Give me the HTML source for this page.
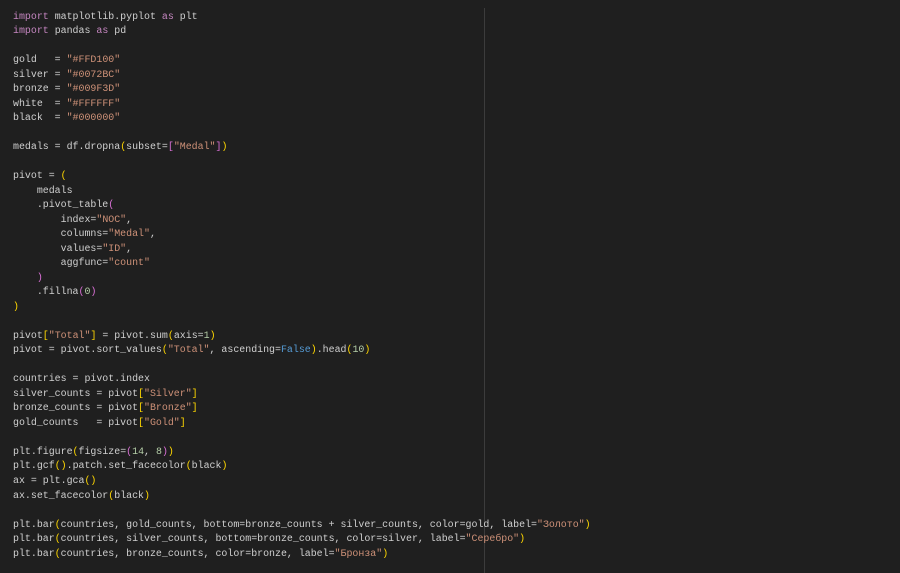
<!DOCTYPE html>
<html><head><meta charset="utf-8"><style>
html,body{margin:0;padding:0;background:#1f1f1f;width:900px;height:573px;overflow:hidden}
pre{position:absolute;left:13px;top:9.5px;margin:0;font-family:"Liberation Mono",monospace;font-size:9.93px;line-height:14.52px;color:#d0d0d0}
.k{color:#c586c0}.s{color:#ce9178}.n{color:#b5cea8}.b{color:#569cd6}
.y{color:#ffd700}.p{color:#da70d6}.l{color:#179fff}
.v{position:absolute;left:484px;top:8px;width:1px;height:565px;background:#3c3c3c}
</style></head><body>
<div class="v"></div>
<pre><span class="k">import</span> matplotlib.pyplot <span class="k">as</span> plt
<span class="k">import</span> pandas <span class="k">as</span> pd

gold   = <span class="s">"#FFD100"</span>
silver = <span class="s">"#0072BC"</span>
bronze = <span class="s">"#009F3D"</span>
white  = <span class="s">"#FFFFFF"</span>
black  = <span class="s">"#000000"</span>

medals = df.dropna<span class="y">(</span>subset=<span class="p">[</span><span class="s">"Medal"</span><span class="p">]</span><span class="y">)</span>

pivot = <span class="y">(</span>
    medals
    .pivot_table<span class="p">(</span>
        index=<span class="s">"NOC"</span>,
        columns=<span class="s">"Medal"</span>,
        values=<span class="s">"ID"</span>,
        aggfunc=<span class="s">"count"</span>
    <span class="p">)</span>
    .fillna<span class="p">(</span><span class="n">0</span><span class="p">)</span>
<span class="y">)</span>

pivot<span class="y">[</span><span class="s">"Total"</span><span class="y">]</span> = pivot.sum<span class="y">(</span>axis=<span class="n">1</span><span class="y">)</span>
pivot = pivot.sort_values<span class="y">(</span><span class="s">"Total"</span>, ascending=<span class="b">False</span><span class="y">)</span>.head<span class="y">(</span><span class="n">10</span><span class="y">)</span>

countries = pivot.index
silver_counts = pivot<span class="y">[</span><span class="s">"Silver"</span><span class="y">]</span>
bronze_counts = pivot<span class="y">[</span><span class="s">"Bronze"</span><span class="y">]</span>
gold_counts   = pivot<span class="y">[</span><span class="s">"Gold"</span><span class="y">]</span>

plt.figure<span class="y">(</span>figsize=<span class="p">(</span><span class="n">14</span>, <span class="n">8</span><span class="p">)</span><span class="y">)</span>
plt.gcf<span class="y">()</span>.patch.set_facecolor<span class="y">(</span>black<span class="y">)</span>
ax = plt.gca<span class="y">()</span>
ax.set_facecolor<span class="y">(</span>black<span class="y">)</span>

plt.bar<span class="y">(</span>countries, gold_counts, bottom=bronze_counts + silver_counts, color=gold, label=<span class="s">"Золото"</span><span class="y">)</span>
plt.bar<span class="y">(</span>countries, silver_counts, bottom=bronze_counts, color=silver, label=<span class="s">"Серебро"</span><span class="y">)</span>
plt.bar<span class="y">(</span>countries, bronze_counts, color=bronze, label=<span class="s">"Бронза"</span><span class="y">)</span></pre>
</body></html>
